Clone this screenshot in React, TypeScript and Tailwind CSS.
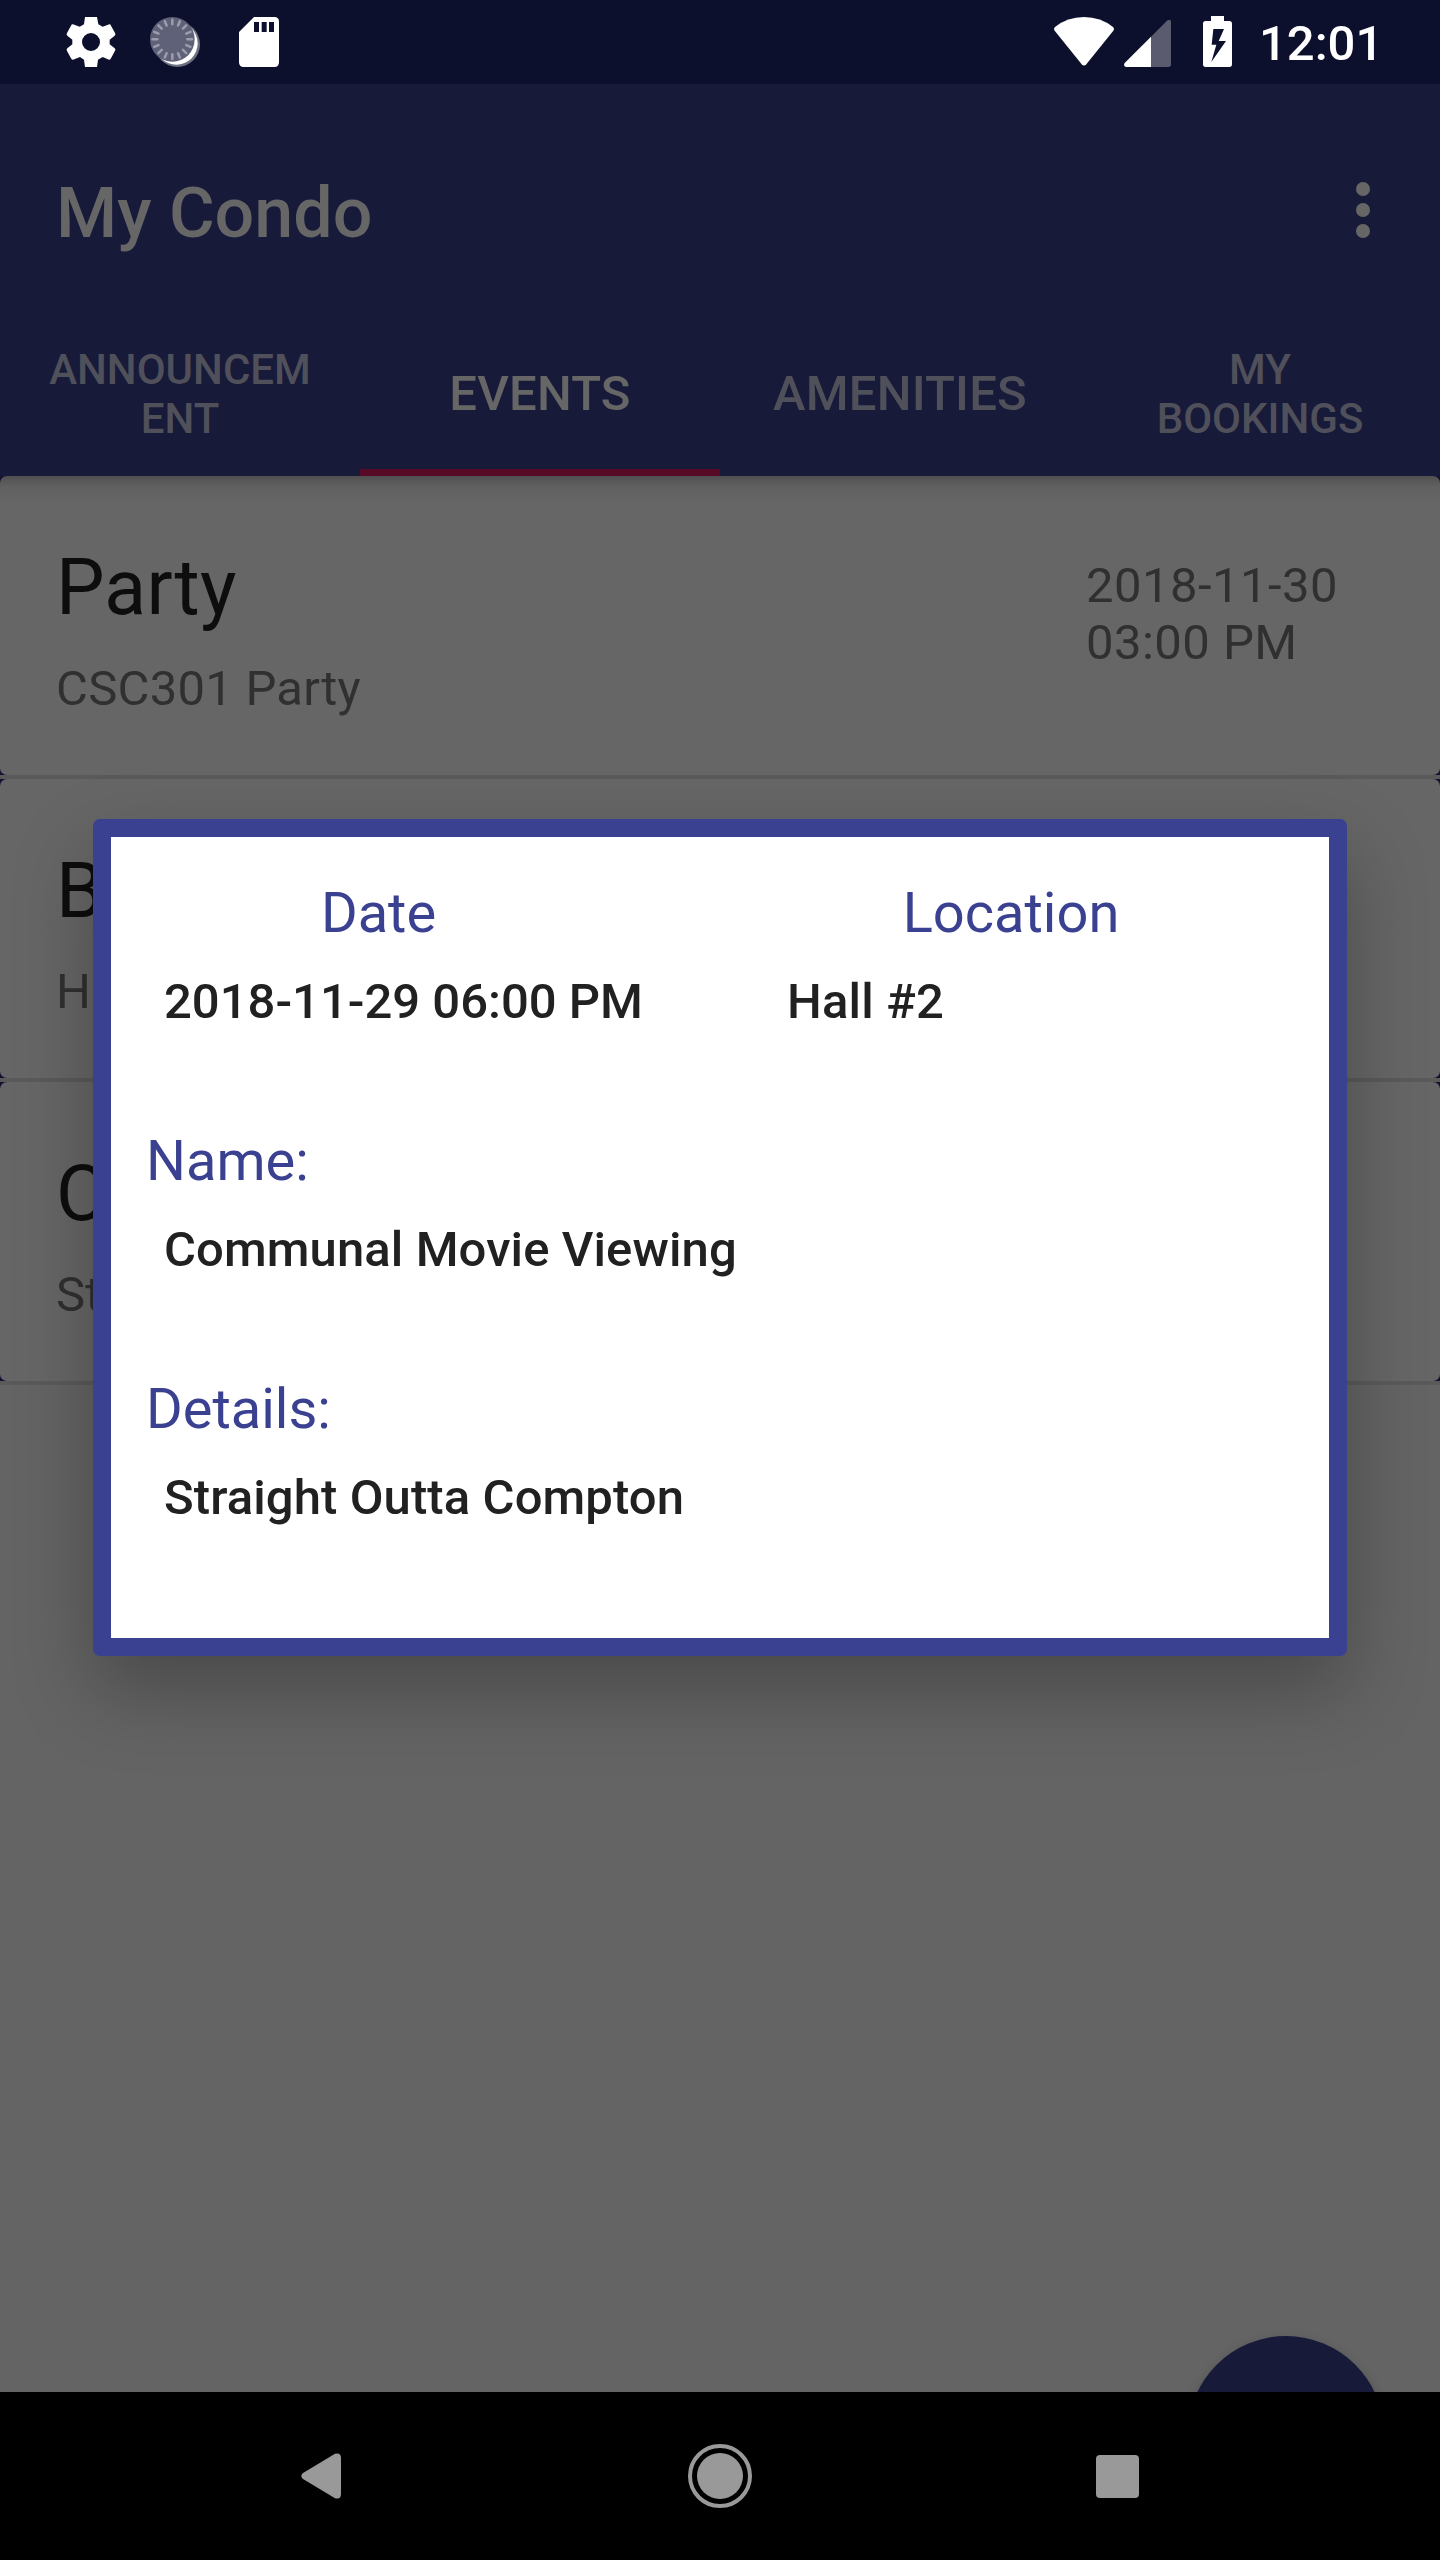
import React from "react";

const tickAngles = Array.from({ length: 16 }, (_, i) => i * 22.5);

function GearIcon() {
  return (
    <svg className="h-[50px] w-[50px]" viewBox="198 51 150 150" fill="#fff">
      <path
        fillRule="evenodd"
        d="M255 51H291L295 73 308 80 328 73Q331 72 333 77L345 99Q348 104 344 107L329 119V133L344 145Q348 148 345 152L333 175Q331 180 327 179L308 171 294 179 291 201H255L252 179 240 171 219 179Q215 180 213 175L201 153Q198 148 202 145L217 133V119L202 107Q198 104 201 99L213 77Q215 72 219 73L239 80 252 73ZM273 99a27 27 0 1 0 0 54a27 27 0 1 0 0 -54Z"
      />
    </svg>
  );
}

function SyncDialIcon() {
  return (
    <svg className="h-[50px] w-[50px]" viewBox="450 51 150 150">
      <circle cx="532" cy="133" r="68" fill="#6e7082" />
      <circle cx="529" cy="130" r="64" fill="#fff" />
      <circle cx="517" cy="118" r="67" fill="#5f6178" />
      <g stroke="#9c9dac" strokeWidth="7.5" strokeLinecap="round">
        {tickAngles.map((a) => (
          <line key={a} x1="517" y1="59" x2="517" y2="73" transform={`rotate(${a} 517 118)`} />
        ))}
      </g>
    </svg>
  );
}

function SdCardIcon() {
  return (
    <svg className="h-[50px] w-[40px]" viewBox="717 51 120 150" fill="#fff">
      <path
        fillRule="evenodd"
        d="M762 51H823Q837 51 837 65V187Q837 201 823 201H731Q717 201 717 187V96ZM762 66V96H777V66ZM785 66V96H800V66ZM807 66V96H822V66Z"
      />
    </svg>
  );
}

function WifiIcon() {
  return (
    <svg className="h-[49px] w-[60px]" viewBox="162 51 180 147" fill="#fff">
      <path d="M165 81Q202 51 252 51Q302 51 339 81Q344 86 340 92L259 193Q252 200 245 193L164 92Q160 86 165 81Z" />
    </svg>
  );
}

function SignalIcon() {
  return (
    <svg className="h-[47px] w-[47px]" viewBox="372 60 141 141">
      <path d="M453 110L501 62Q513 55 513 67V193Q513 201 505 201H453Z" fill="#5a5b6e" />
      <path d="M453 110V201H378Q369 198 374 189Z" fill="#fff" />
    </svg>
  );
}

function BatteryIcon() {
  return (
    <svg className="h-[51px] w-[29px]" viewBox="609 48 87 153" fill="#fff">
      <path
        fillRule="evenodd"
        d="M633 48H672V63H688Q696 63 696 71V193Q696 201 688 201H617Q609 201 609 193V71Q609 63 617 63H633ZM640 87L635 134H649L634 186L678 123H656L672 87Z"
      />
    </svg>
  );
}

function StatusBar() {
  return (
    <div className="flex h-[84px] shrink-0 items-start bg-[#0d102d] pt-[17px]">
      <div className="ml-[66px] flex gap-[34px]">
        <GearIcon />
        <SyncDialIcon />
        <div className="ml-[5px]">
          <SdCardIcon />
        </div>
      </div>
      <div className="ml-auto flex items-start">
        <WifiIcon />
        <div className="mt-[3px] ml-[10px]">
          <SignalIcon />
        </div>
        <div className="-mt-px ml-8">
          <BatteryIcon />
        </div>
        <span className="ml-[27px] w-[181px] text-[49px] leading-[54px] font-medium text-white">12:01</span>
      </div>
    </div>
  );
}

function Header() {
  const tabs = ["ANNOUNCEM\nENT", "EVENTS", "AMENITIES", "MY\nBOOKINGS"];
  return (
    <header className="flex h-[392px] shrink-0 flex-col bg-[#181a3a]">
      <div className="flex h-[224px] items-center justify-between pt-[34px] pr-[70px] pl-14">
        <h1 className="text-[70px] leading-[82px] font-medium text-[#666666]">My Condo</h1>
        <div className="-mt-[6px] flex flex-col gap-[7px]">
          <span className="size-[14px] rounded-full bg-[#666666]" />
          <span className="size-[14px] rounded-full bg-[#666666]" />
          <span className="size-[14px] rounded-full bg-[#666666]" />
        </div>
      </div>
      <nav className="grid h-[168px] grid-cols-4">
        {tabs.map((t) => (
          <div
            key={t}
            className={`flex items-center justify-center border-b-[7px] pt-[10px] text-center leading-[49px] font-medium whitespace-pre-line ${
              t === "EVENTS" ? "border-[#570b26] text-[#666666]" : "border-transparent text-[#50505a]"
            } ${t.includes("\n") ? "text-[42px]" : "text-[49px] tracking-[0.2px]"}`}
          >
            {t}
          </div>
        ))}
      </nav>
    </header>
  );
}

type EventItem = { title: string; description: string; date: string };

const events: EventItem[] = [
  { title: "Party", description: "CSC301 Party", date: "2018-11-30\n03:00 PM" },
  { title: "B", description: "H", date: "" },
  { title: "C", description: "St", date: "" },
];

function EventCard({ item, first }: { item: EventItem; first: boolean }) {
  return (
    <li className="border-b-4 border-[#5a5a5a] bg-[#111231]">
      <div
        className={`flex h-[299px] justify-between rounded-[7px] pl-14 ${
          first ? "bg-linear-to-b from-[#505050] via-[#606060] via-[10px] to-[#666666] to-[26px]" : "bg-[#666666]"
        }`}
      >
        <div className="pt-[67px]">
          <h2 className="text-[77px] leading-[90px] tracking-[0.2px] text-[#0d0d0d]">{item.title}</h2>
          <p className="mt-[27px] text-[49px] leading-[57px] tracking-[0.25px] text-[#303030]">{item.description}</p>
        </div>
        <p className="w-[354px] pt-[81px] text-[49px] leading-[57px] tracking-[0.45px] whitespace-pre-line text-[#303030]">
          {item.date}
        </p>
      </div>
    </li>
  );
}

function Field({ label, value }: { label: string; value: string }) {
  return (
    <div className="mt-[98px]">
      <p className="-ml-px text-[56px] leading-[66px] text-[#3b4191]">{label}</p>
      <p className="mt-[27px] pl-[17px] text-[49px] leading-[57px] font-medium tracking-[0.1px] text-[#212121]">
        {value}
      </p>
    </div>
  );
}

function EventDialog() {
  return (
    <div className="absolute top-[819px] left-[93px] h-[837px] w-[1254px] rounded-[7px] bg-[#3b4191] p-[18px] shadow-[0_35px_80px_rgba(0,0,0,0.27)]">
      <div className="h-full bg-white px-9 pt-[43px]">
        <div className="flex">
          <div className="w-[623px]">
            <p className="w-[463px] text-center text-[56px] leading-[66px] text-[#3b4191]">Date</p>
            <p className="mt-[27px] pl-[17px] text-[49px] leading-[57px] font-medium text-[#212121]">
              2018-11-29 06:00 PM
            </p>
          </div>
          <div className="w-[482px]">
            <p className="text-center text-[56px] leading-[66px] text-[#3b4191]">Location</p>
            <p className="mt-[27px] pl-[17px] text-[49px] leading-[57px] font-medium tracking-[0.2px] text-[#212121]">
              Hall #2
            </p>
          </div>
        </div>
        <Field label="Name:" value="Communal Movie Viewing" />
        <Field label="Details:" value="Straight Outta Compton" />
      </div>
    </div>
  );
}

function NavigationBar() {
  return (
    <div className="flex h-[168px] shrink-0 items-center bg-black">
      <svg className="ml-[301px] h-[46px] w-[40px]" viewBox="0 0 40 46" fill="#999999">
        <path d="M2 20L34 .8Q40 -1 40 5V41Q40 47 34 45.200L2 26Q-1.500 23 2 20Z" />
      </svg>
      <div className="ml-[347px] flex size-[64px] items-center justify-center rounded-full border-4 border-[#999999]">
        <div className="size-[46px] rounded-full bg-[#999999]" />
      </div>
      <div className="ml-[344px] size-[43px] rounded-[4px] bg-[#999999]" />
    </div>
  );
}

export default function App() {
  return (
    <div className="relative flex h-[2560px] w-[1440px] flex-col overflow-hidden bg-[#646464] font-['Roboto',sans-serif]">
      <StatusBar />
      <Header />
      <main className="relative flex-1 overflow-hidden">
        <ul>
          {events.map((e, i) => (
            <EventCard key={e.title} item={e} first={i === 0} />
          ))}
        </ul>
        <button
          aria-label="Add event"
          className="absolute top-[1860px] left-[1188px] size-[196px] rounded-full bg-[#181a3a] shadow-[0_4px_12px_rgba(0,0,0,0.2)]"
        />
      </main>
      <NavigationBar />
      <EventDialog />
    </div>
  );
}
